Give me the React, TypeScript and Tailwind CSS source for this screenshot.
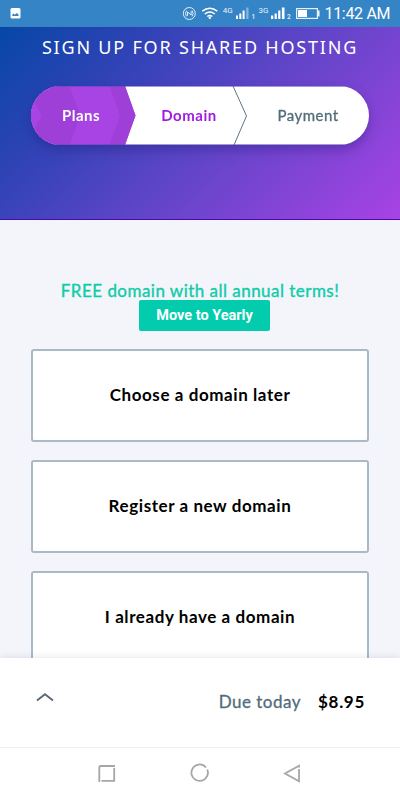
import React from 'react';

function StatusBar() {
  return (
    <div className="h-[27px] shrink-0 bg-[#3584c5] border-b border-[#3c7fc4]">
      <svg width="400" height="27" viewBox="0 0 400 27" fill="none" className="block">
        <rect x="10.500" y="8" width="10" height="10.500" rx="1.500" fill="#fff" />
        <path d="M12.300 16v-1.500l1.200-1 1.200 1.200 2.200-1.700 1.600 1.600V16z" fill="#3584c5" />
        <g stroke="#e4f0fa" strokeWidth="1">
          <circle cx="189.300" cy="13.500" r="6" />
          <path d="M186.600 10.600q-2.300 2.900 0 5.800M192 10.600q2.300 2.900 0 5.800M187.500 15.800V12l3.600 3V11.200" />
        </g>
        <g stroke="#fff" strokeWidth="1.500">
          <path d="M202.300 11.200q7.500-6 15 0M204.800 14q5-4 10 0M207.300 16.500q2.500-2 5 0" />
        </g>
        <circle cx="209.800" cy="17.800" r="1.200" fill="#fff" />
        <g fill="#fff">
          <rect x="236" y="15.500" width="2" height="3.500" />
          <rect x="239.300" y="13.500" width="2" height="5.500" />
          <rect x="242.600" y="10.500" width="2" height="8.500" />
          <rect x="246.200" y="7.500" width="2.300" height="11.500" opacity=".4" />
          <rect x="271" y="15.500" width="2.200" height="3.500" />
          <rect x="274.600" y="13.500" width="2.200" height="5.500" />
          <rect x="278.200" y="10.500" width="2.200" height="8.500" />
          <rect x="281.900" y="7.500" width="2.600" height="11.500" />
        </g>
        <g fill="#e9f3fb" fontFamily="Roboto, sans-serif">
          <text x="222.700" y="13" fontSize="8">4G</text>
          <text x="258.500" y="13" fontSize="8">3G</text>
          <text x="251.500" y="19" fontSize="6.500" fontWeight="500">1</text>
          <text x="287" y="19" fontSize="6.500" fontWeight="500">2</text>
          <text x="324.500" y="19.300" fontSize="16" textLength="66" fill="#fff">11:42 AM</text>
        </g>
        <rect x="296.600" y="8.600" width="20.800" height="9.800" stroke="#e4f0fa" strokeWidth="1.200" />
        <rect x="298" y="10" width="9" height="7" fill="#fff" />
        <path d="M318.800 10.500v6" stroke="#fff" strokeWidth="1.400" />
      </svg>
    </div>
  );
}

function Stepper() {
  return (
    <div className="relative mx-[31px] mt-[26px] flex h-[59px] items-center overflow-hidden rounded-full bg-white font-['Lato',sans-serif] text-[15px] tracking-[0.500px]">
      <svg className="absolute inset-0" width="338" height="59" viewBox="0 0 338 59" fill="none">
        <path d="M0 0H94L104.500 29.500 94 59H0z" fill="#a843e4" />
        <path d="M0 0H38.500L49 29.500 38.500 59H0zM78.500 0H94L104.500 29.500 94 59H78.500L89 29.500z" fill="#9e40d8" />
        <path d="M0 9.500L10.500 29.500 0 49.500z" fill="#a843e4" />
        <path d="M202 0L215.500 30 203 59" stroke="#5c7482" />
        <path d="M0 .5H338M0 58.500H338" stroke="#5548bd" strokeOpacity=".55" />
      </svg>
      <span className="relative w-[100px] text-center font-bold text-white">Plans</span>
      <span className="relative w-[116px] text-center font-bold text-[#a01ce0]">Domain</span>
      <span className="relative w-[122px] text-center text-[#516c7a] [-webkit-text-stroke:0.300px_#516c7a]">Payment</span>
    </div>
  );
}

function Option({ label }: { label: string }) {
  return (
    <button className="block h-[93px] w-full shrink-0 rounded-[3px] border-2 border-[#a9bac7] bg-white pb-[2px] text-center font-['Lato',sans-serif] text-[17px] font-bold tracking-[0.580px] text-black">
      {label}
    </button>
  );
}

export default function App() {
  return (
    <div className="flex h-[800px] w-[400px] flex-col overflow-hidden bg-[#f4f5fa]">
      <StatusBar />
      <header className="h-[193px] shrink-0 overflow-hidden border-b border-[#4a08b4] bg-[linear-gradient(135deg,#0647a6_0%,#2e43b5_25%,#6045c8_55%,#a843e4_100%)]">
        <h1 className="mt-[8px] h-[25px] whitespace-nowrap text-center font-['Noto_Sans',sans-serif] text-[18px] leading-[25px] tracking-[1.800px] text-white">
          SIGN UP FOR SHARED HOSTING
        </h1>
        <div className="drop-shadow-[0_5px_6px_rgba(30,20,110,0.35)]">
          <Stepper />
        </div>
      </header>
      <main className="flex min-h-0 flex-1 flex-col overflow-hidden px-[31px] pt-[60px]">
        <p className="h-[20px] shrink-0 whitespace-nowrap text-center font-['Lato',sans-serif] text-[17px] leading-[21px] tracking-[0.470px] text-[#0fcba9] [-webkit-text-stroke:0.350px_#0fcba9]">
          FREE domain with all annual terms!
        </p>
        <button className="ml-[108px] h-[31px] w-[131px] shrink-0 rounded-[2px] bg-[#02ccad] font-['Roboto',sans-serif] text-[14.500px] font-bold text-white">
          Move to Yearly
        </button>
        <div className="mt-[18px] flex flex-col gap-[18px]">
          <Option label="Choose a domain later" />
          <Option label="Register a new domain" />
          <Option label="I already have a domain" />
        </div>
      </main>
      <footer className="relative flex h-[90px] shrink-0 items-center border-b border-[#eef0f0] bg-white pl-[36px] pr-[35px] font-['Lato',sans-serif] text-[17px] tracking-[0.500px] shadow-[0_0_8px_rgba(70,100,110,0.18)]">
        <svg width="18" height="10" viewBox="0 0 18 10" fill="none" className="-mt-[11px]">
          <path d="M1 8.500L9 2.200 17 8.500" stroke="#5c6875" strokeWidth="1.900" />
        </svg>
        <span className="-mt-px ml-auto text-[#516c7a] [-webkit-text-stroke:0.300px_#516c7a]">Due today</span>
        <span className="-mt-px ml-[17px] font-bold tracking-[0.700px] text-black">$8.95</span>
      </footer>
      <nav className="relative h-[52px] shrink-0 bg-white">
        <svg width="400" height="52" viewBox="0 0 400 52" fill="none" stroke="#a6a6a6" strokeWidth="1.800" className="block">
          <path d="M99.300 34V19.500q0-1.500 1.500-1.500H115M114.200 20V32.800H101.500" />
          <path d="M206 19.500A8.200 8.200 0 1 0 207.200 21.500" />
          <path d="M299 19.500V17.800L285 25.500 299 33.200V21" />
        </svg>
      </nav>
    </div>
  );
}
